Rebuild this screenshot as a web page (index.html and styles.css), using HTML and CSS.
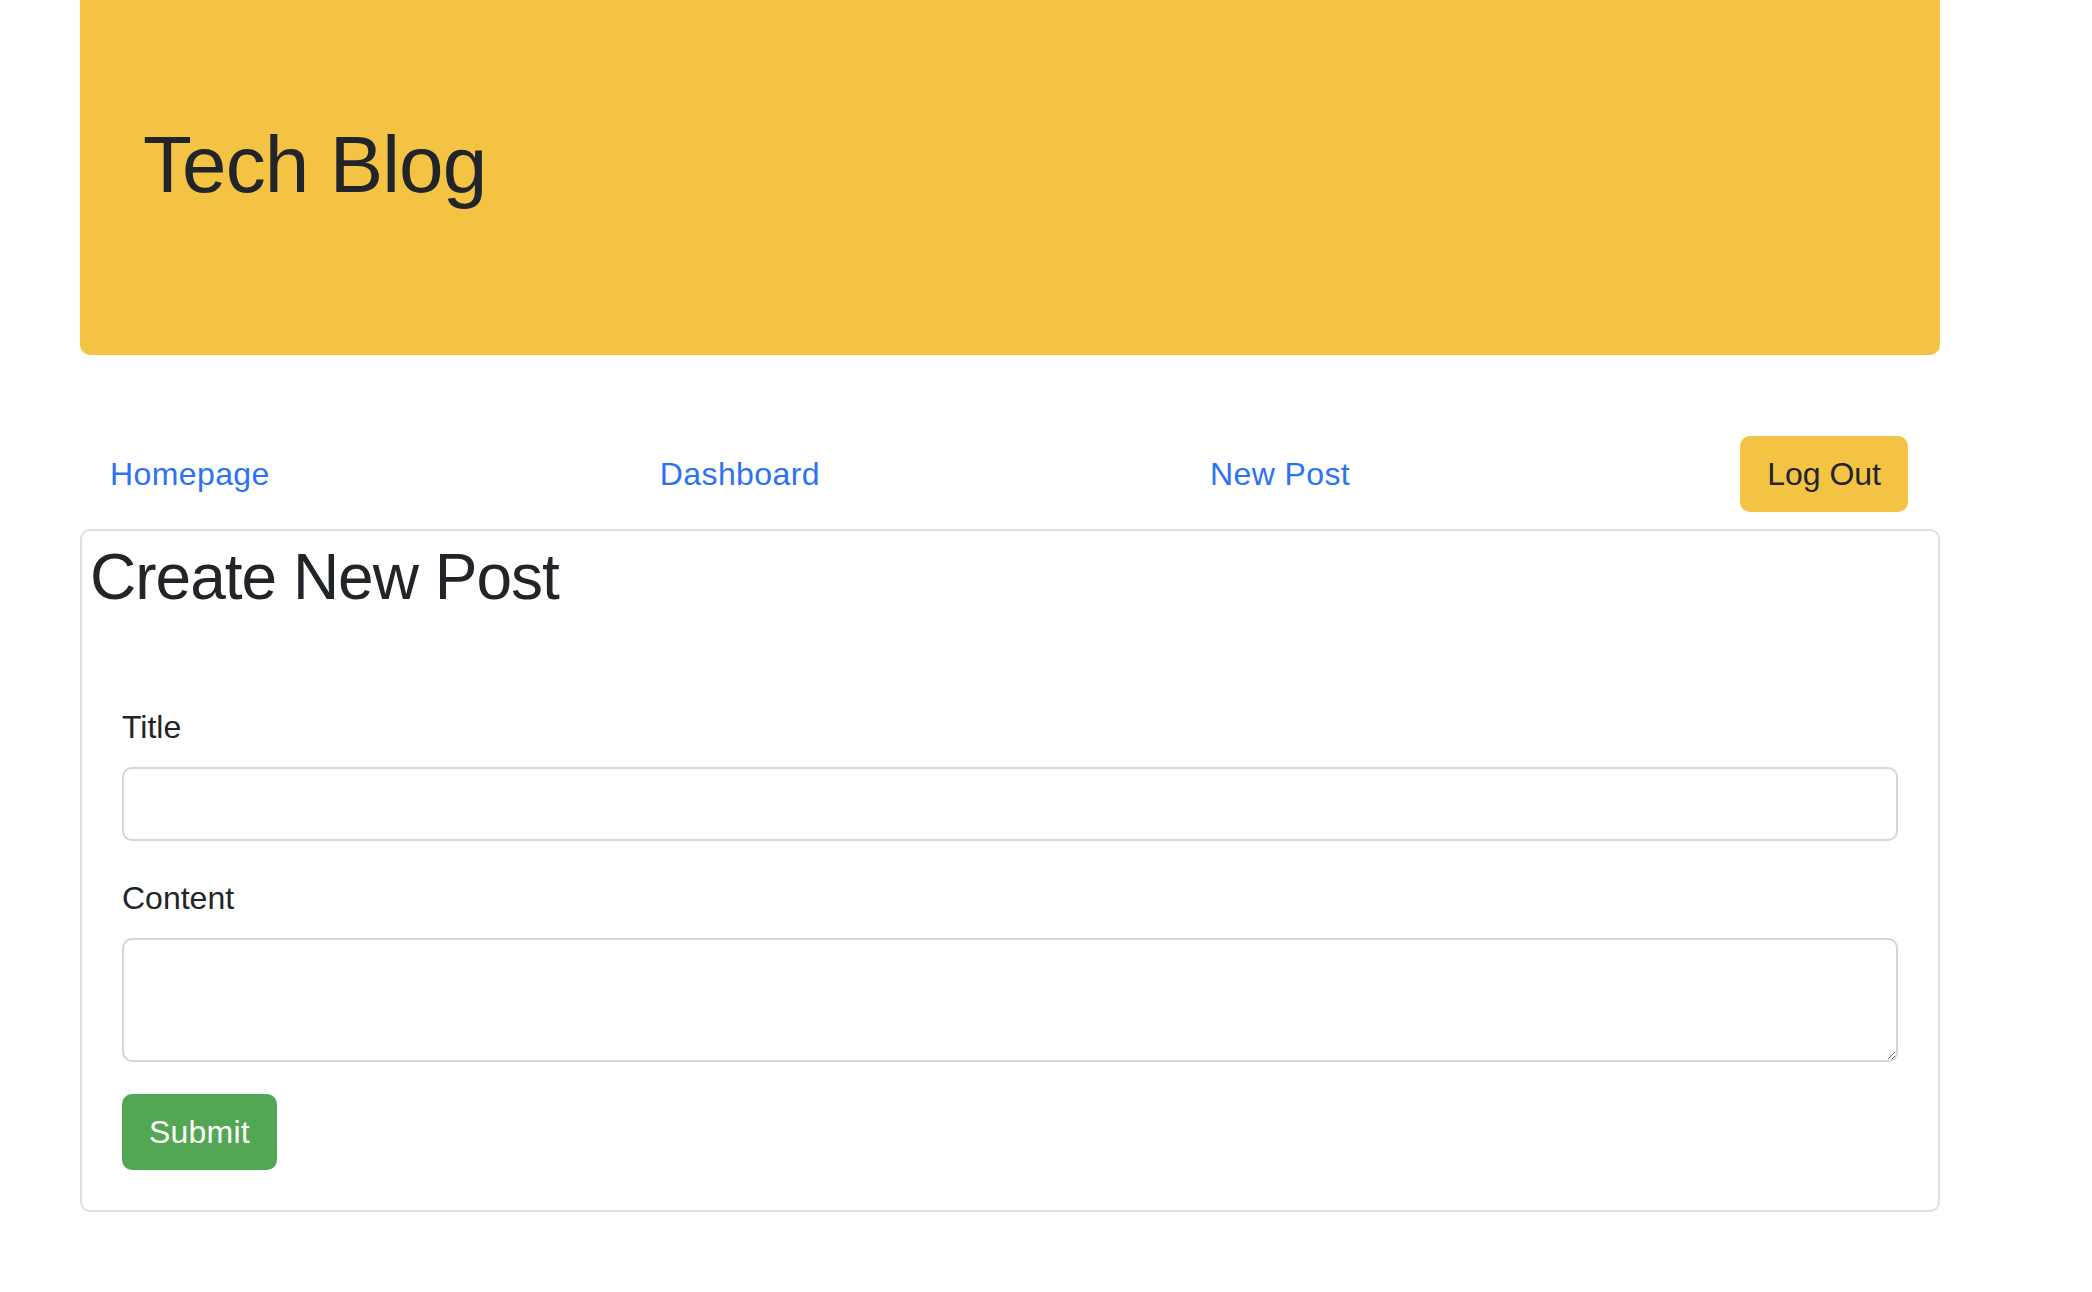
FILE: index.html
```html
<!DOCTYPE html>
<html lang="en">
<head>
<meta charset="utf-8">
<title>Tech Blog</title>
<link rel="stylesheet" href="styles.css">
</head>
<body>
<div class="page">
  <header class="hero">
    <h1 class="hero-title">Tech Blog</h1>
  </header>
  <nav class="nav">
    <a class="nav-link" href="#">Homepage</a>
    <a class="nav-link" href="#">Dashboard</a>
    <a class="nav-link" href="#">New Post</a>
    <button class="btn btn-warning" type="button">Log Out</button>
  </nav>
  <section class="card">
    <h2 class="card-title">Create New Post</h2>
    <form class="post-form">
      <div class="field">
        <label class="form-label" for="title">Title</label>
        <input class="form-control" id="title" type="text">
      </div>
      <div class="field">
        <label class="form-label" for="content">Content</label>
        <textarea class="form-control form-textarea" id="content"></textarea>
      </div>
      <button class="btn btn-success" type="submit">Submit</button>
    </form>
  </section>
</div>
</body>
</html>
```

FILE: styles.css
```css
* { box-sizing: border-box; }

html, body {
  margin: 0;
  padding: 0;
  background: #ffffff;
}

body {
  font-family: "Liberation Sans", Arial, sans-serif;
  font-size: 32px;
  line-height: 48px;
  color: #212529;
}

.page {
  width: 1860px;
  margin-left: 80px;
}

.hero {
  height: 355px;
  background: #f5c344;
  border-radius: 0 0 10px 10px;
  padding: 117px 0 0 63px;
}

.hero-title {
  margin: 0;
  font-size: 80px;
  line-height: 96px;
  font-weight: 400;
  letter-spacing: -0.9px;
  color: #212529;
}

.nav {
  display: flex;
  justify-content: space-between;
  align-items: center;
  margin-top: 81px;
  padding: 0 32px 0 30px;
}

.nav-link {
  color: #2c72f5;
  text-decoration: none;
  font-size: 32px;
  line-height: 48px;
  letter-spacing: 0.4px;
}

.btn {
  font-family: "Liberation Sans", Arial, sans-serif;
  font-size: 32px;
  line-height: 48px;
  padding: 12px 25px;
  border: 2px solid transparent;
  border-radius: 10px;
  cursor: pointer;
}

.btn-warning {
  background: #f5c344;
  border-color: #f5c344;
  color: #212529;
}

.btn-success {
  background: #53a653;
  border-color: #53a653;
  color: #ffffff;
  height: 76px;
  padding: 0 25px;
  letter-spacing: 0.2px;
}

.card {
  margin-top: 17px;
  border: 2px solid #dfdfdf;
  border-radius: 10px;
  padding: 8px;
}

.card-title {
  margin: 0;
  font-size: 64px;
  line-height: 77px;
  font-weight: 400;
  letter-spacing: -1px;
  color: #212529;
}

.post-form {
  padding: 87px 32px 32px 32px;
}

.field {
  display: flex;
  flex-direction: column;
  margin-bottom: 33px;
}

.field + .field {
  margin-bottom: 32px;
}

.form-label {
  display: block;
  margin-bottom: 16px;
  font-size: 32px;
  line-height: 48px;
}

.form-control {
  display: block;
  width: 100%;
  height: 74px;
  border: 2px solid #d1d6db;
  border-radius: 10px;
  background: #ffffff;
  font-family: "Liberation Sans", Arial, sans-serif;
  font-size: 32px;
  padding: 12px 24px;
  margin: 0;
}

.form-textarea {
  height: 124px;
  resize: vertical;
}
```
